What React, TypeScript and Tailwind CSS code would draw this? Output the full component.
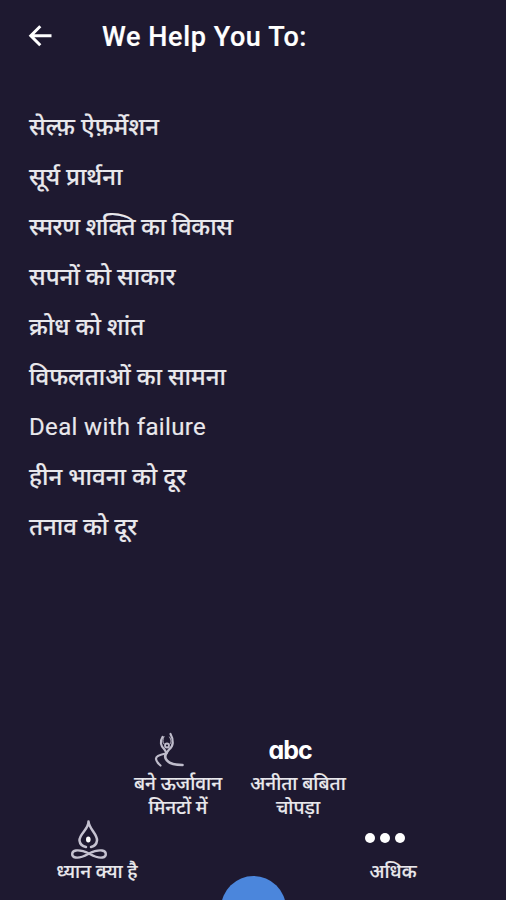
const topics: { text: string; style: string }[] = [
  { text: 'सेल्फ़ ऐफ़र्मेशन', style: '' },
  { text: 'सूर्य प्रार्थना', style: '' },
  { text: 'स्मरण शक्ति का विकास', style: 'tracking-[-0.35px]' },
  { text: 'सपनों को साकार', style: '' },
  { text: 'क्रोध को शांत', style: '' },
  { text: 'विफलताओं का सामना', style: '' },
  { text: 'Deal with failure', style: 'font-normal tracking-[0.35px]' },
  { text: 'हीन भावना को दूर', style: '' },
  { text: 'तनाव को दूर', style: '' },
];

function BackArrow() {
  return (
    <svg className="ml-7 h-6 w-6" viewBox="0 0 24 24" fill="none" stroke="#fff" strokeWidth="3">
      <path d="M23.5 11.700H2.600M12.300 2.200 2.800 11.700l9.500 9.500" />
    </svg>
  );
}

function DancerIcon() {
  return (
    <svg className="h-9 w-8" viewBox="0 0 32 36" fill="none" stroke="#bfbccb" strokeLinecap="round">
      <path d="M9.500 5C6.800 9 7.500 14.500 11.500 17.500l2 3.500 2.500-3.500C20.500 14.500 21 8 17.500 2" strokeWidth="2.200" />
      <path d="M11 4.500C9.500 8 9.500 10 11 12M16.500 5C18.500 8 18.500 10 17 12" strokeWidth="1" />
      <path d="M12.500 21.500c-4 .8-10 2-9.500 5.500.3 3 2 4.500 4.500 6.500" strokeWidth="2.200" />
      <path d="M13.500 21c-2 3-2 5 .5 7.500 3 3.500 8 4.500 15.500 4.500" strokeWidth="2.600" />
      <circle cx="14" cy="13.500" r="2" strokeWidth="1.800" />
    </svg>
  );
}

function MeditationIcon() {
  return (
    <svg className="h-10 w-10" viewBox="0 0 40 40" fill="none" stroke="#c5c2d0" strokeLinecap="round">
      <path d="M19.500 1.500C20 9 10 14 10.500 20.500c.4 3.500 3 5.800 6.500 6.500M19.500 1.500C20 9 28.500 14 28 20.500c-.4 3.500-3 5.800-6 6.500" strokeWidth="2.500" />
      <ellipse cx="19.300" cy="19.500" rx="2.300" ry="2.900" fill="#fff" stroke="none" />
      <path d="M20 33.500c-5-2.500-9-3.500-13-3-5 .8-5 6-.5 7 5 1 9-1.500 13.500-4 4.500-2.300 9-3.500 13-3 5 .8 5 6 .5 7-5 1-9-1.500-13.500-4Z" strokeWidth="2.400" />
    </svg>
  );
}

export default function App() {
  return (
    <div className="relative flex h-[900px] w-[506px] flex-col overflow-hidden bg-[#1e1930] font-['Roboto','Noto_Sans',sans-serif] text-[#e9e8ec]">
      <header className="flex h-[72px] shrink-0 items-center">
        <BackArrow />
        <h1 className="ml-[50px] pt-px text-[27px] leading-8 font-medium tracking-[0.6px] whitespace-nowrap text-white [-webkit-text-stroke:0.2px]">We Help You To:</h1>
      </header>
      <ul className="mt-[30px] pl-[29px] text-[24px] leading-[50px] font-medium [-webkit-text-stroke:0.15px]">
        {topics.map((topic) => (
          <li key={topic.text} className="h-[50px] whitespace-nowrap">
            <span className={topic.style}>{topic.text}</span>
          </li>
        ))}
      </ul>
      <nav className="mt-auto h-[168px] shrink-0 text-center text-[19px] leading-6 font-medium [-webkit-text-stroke:0.15px]">
        <div className="flex h-[88px] pl-[118px]">
          <div className="flex w-[120px] flex-col items-center">
            <div className="mr-[18px] h-10"><DancerIcon /></div>
            <div className="whitespace-nowrap">बने ऊर्जावान<br />मिनटों में</div>
          </div>
          <div className="flex w-[120px] flex-col items-center">
            <div className="mr-4 h-10 font-['Inter'] text-[25px] leading-[37px] font-bold tracking-[-1px] text-white [-webkit-text-stroke:0] [font-feature-settings:'cv11']">abc</div>
            <div className="whitespace-nowrap">अनीता बबिता<br />चोपड़ा</div>
          </div>
        </div>
        <div className="flex h-20 justify-between pr-[53px] pl-[37px]">
          <div className="flex w-[120px] flex-col items-center">
            <div className="mr-4 h-10"><MeditationIcon /></div>
            <div className="whitespace-nowrap">ध्यान क्या है</div>
          </div>
          <div className="flex w-[120px] flex-col items-center">
            <div className="mr-4 flex h-10 gap-[5px] pt-[13px]">
              <i className="h-[10px] w-[10px] rounded-full bg-white" />
              <i className="h-[10px] w-[10px] rounded-full bg-white" />
              <i className="h-[10px] w-[10px] rounded-full bg-white" />
            </div>
            <div>अधिक</div>
          </div>
        </div>
      </nav>
      <div className="absolute top-[876px] left-[221px] h-[65px] w-[65px] rounded-full bg-[#4b86dc]" />
    </div>
  );
}
